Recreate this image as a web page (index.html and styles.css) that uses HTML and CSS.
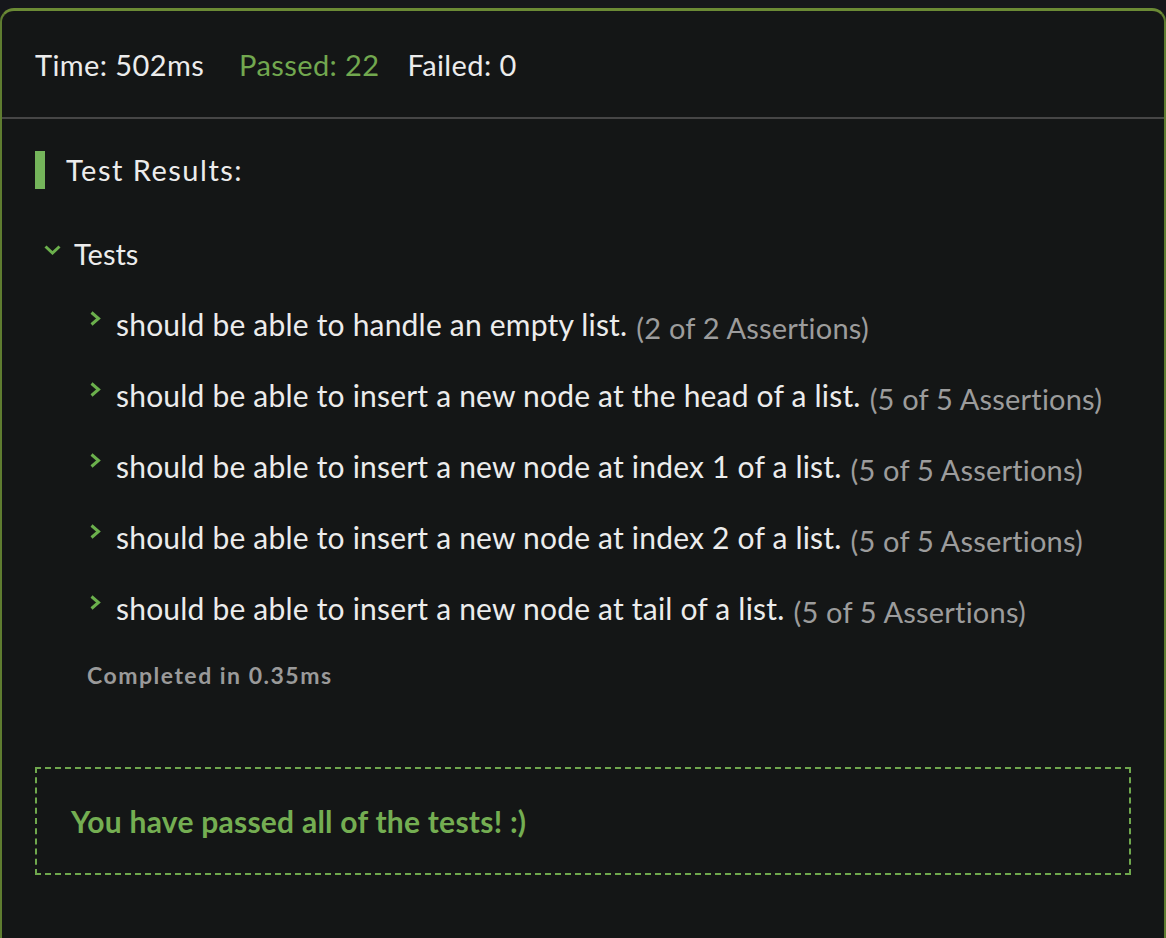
FILE: index.html
```html
<!DOCTYPE html>
<html>
<head>
<meta charset="utf-8">
<link rel="stylesheet" href="styles.css">
</head>
<body>
<div class="panel">
  <div class="stats">
    <span class="stat time">Time: 502ms</span>
    <span class="stat passed">Passed: 22</span>
    <span class="stat">Failed: 0</span>
  </div>
  <div class="content">
    <h2 class="results-title">Test Results:</h2>
    <div class="group">
      <div class="group-head">
        <svg class="chev-down" width="17" height="10" viewBox="0 0 17 10"><path d="M1.5 1.5 L8.5 8 L15.5 1.5" fill="none" stroke="#6bb04c" stroke-width="3"/></svg>
        <span>Tests</span>
      </div>
      <ul class="tests">
        <li class="test"><svg class="chev-right" width="11" height="15" viewBox="0 0 11 15"><path d="M1.5 1.5 L8.5 7.5 L1.5 13.5" fill="none" stroke="#6bb04c" stroke-width="3"/></svg><span class="name">should be able to handle an empty list.</span><span class="count">(2 of 2 Assertions)</span></li>
        <li class="test"><svg class="chev-right" width="11" height="15" viewBox="0 0 11 15"><path d="M1.5 1.5 L8.5 7.5 L1.5 13.5" fill="none" stroke="#6bb04c" stroke-width="3"/></svg><span class="name">should be able to insert a new node at the head of a list.</span><span class="count">(5 of 5 Assertions)</span></li>
        <li class="test"><svg class="chev-right" width="11" height="15" viewBox="0 0 11 15"><path d="M1.5 1.5 L8.5 7.5 L1.5 13.5" fill="none" stroke="#6bb04c" stroke-width="3"/></svg><span class="name">should be able to insert a new node at index 1 of a list.</span><span class="count">(5 of 5 Assertions)</span></li>
        <li class="test"><svg class="chev-right" width="11" height="15" viewBox="0 0 11 15"><path d="M1.5 1.5 L8.5 7.5 L1.5 13.5" fill="none" stroke="#6bb04c" stroke-width="3"/></svg><span class="name">should be able to insert a new node at index 2 of a list.</span><span class="count">(5 of 5 Assertions)</span></li>
        <li class="test"><svg class="chev-right" width="11" height="15" viewBox="0 0 11 15"><path d="M1.5 1.5 L8.5 7.5 L1.5 13.5" fill="none" stroke="#6bb04c" stroke-width="3"/></svg><span class="name">should be able to insert a new node at tail of a list.</span><span class="count">(5 of 5 Assertions)</span></li>
      </ul>
      <div class="completed">Completed in 0.35ms</div>
    </div>
    <div class="success">You have passed all of the tests! :)</div>
  </div>
</div>
</body>
</html>
```

FILE: styles.css
```css
html, body {
  margin: 0;
  padding: 0;
  background: #16171b;
  height: 100%;
}
body {
  padding-top: 8px;
  box-sizing: border-box;
  font-family: "Lato", "Noto Sans", sans-serif;
  color: #ececec;
}
.panel {
  box-sizing: border-box;
  min-height: 930px;
  background: #141616;
  border-top: 3px solid #6b8a35;
  border-left: 2px solid #5f7d30;
  border-right: 2px solid #5f7d30;
  border-radius: 14px 14px 0 0;
}
.stats {
  display: flex;
  padding: 0 33px;
  height: 106px;
  align-items: center;
  font-size: 29px;
  letter-spacing: 0.4px;
  border-bottom: 2px solid #464646;
}
.time { margin-right: 35px; }
.passed { color: #72a84f; margin-right: 28px; }
.content {
  padding: 32px 33px 0 33px;
}
.results-title {
  margin: 0;
  font-weight: 400;
  font-size: 29px;
  letter-spacing: 1.5px;
  border-left: 10px solid #74b45a;
  padding-left: 21px;
  line-height: 38px;
}
.group { margin-top: 47px; }
.group-head {
  display: flex;
  align-items: flex-start;
  gap: 13px;
  font-size: 29px;
  line-height: 36px;
  padding-left: 9px;
}
.chev-down { flex: none; margin-top: 9px; }
.tests {
  list-style: none;
  margin: 34px 0 0 0;
  padding: 0 0 0 55px;
  display: flex;
  flex-direction: column;
  gap: 35px;
}
.test {
  display: flex;
  align-items: baseline;
  font-size: 30px;
  line-height: 36px;
  height: 36px;
  letter-spacing: 0.2px;
}
.chev-right {
  flex: none;
  align-self: flex-start;
  margin-top: 5px;
  margin-right: 15px;
}
.count {
  color: #9c9c9c;
  font-size: 29px;
  line-height: 28px;
  margin-left: 9px;
  position: relative;
  top: 3px;
}
.completed {
  margin: 35px 0 0 52px;
  font-size: 23px;
  line-height: 28px;
  font-weight: 700;
  color: #9a9a9a;
  letter-spacing: 1.5px;
}
.success {
  margin-top: 78px;
  border: 2px dashed #6fa84d;
  padding: 0 34px;
  height: 108px;
  box-sizing: border-box;
  display: flex;
  align-items: center;
  color: #74ae52;
  font-weight: 700;
  font-size: 30px;
  letter-spacing: 0.25px;
}
```
